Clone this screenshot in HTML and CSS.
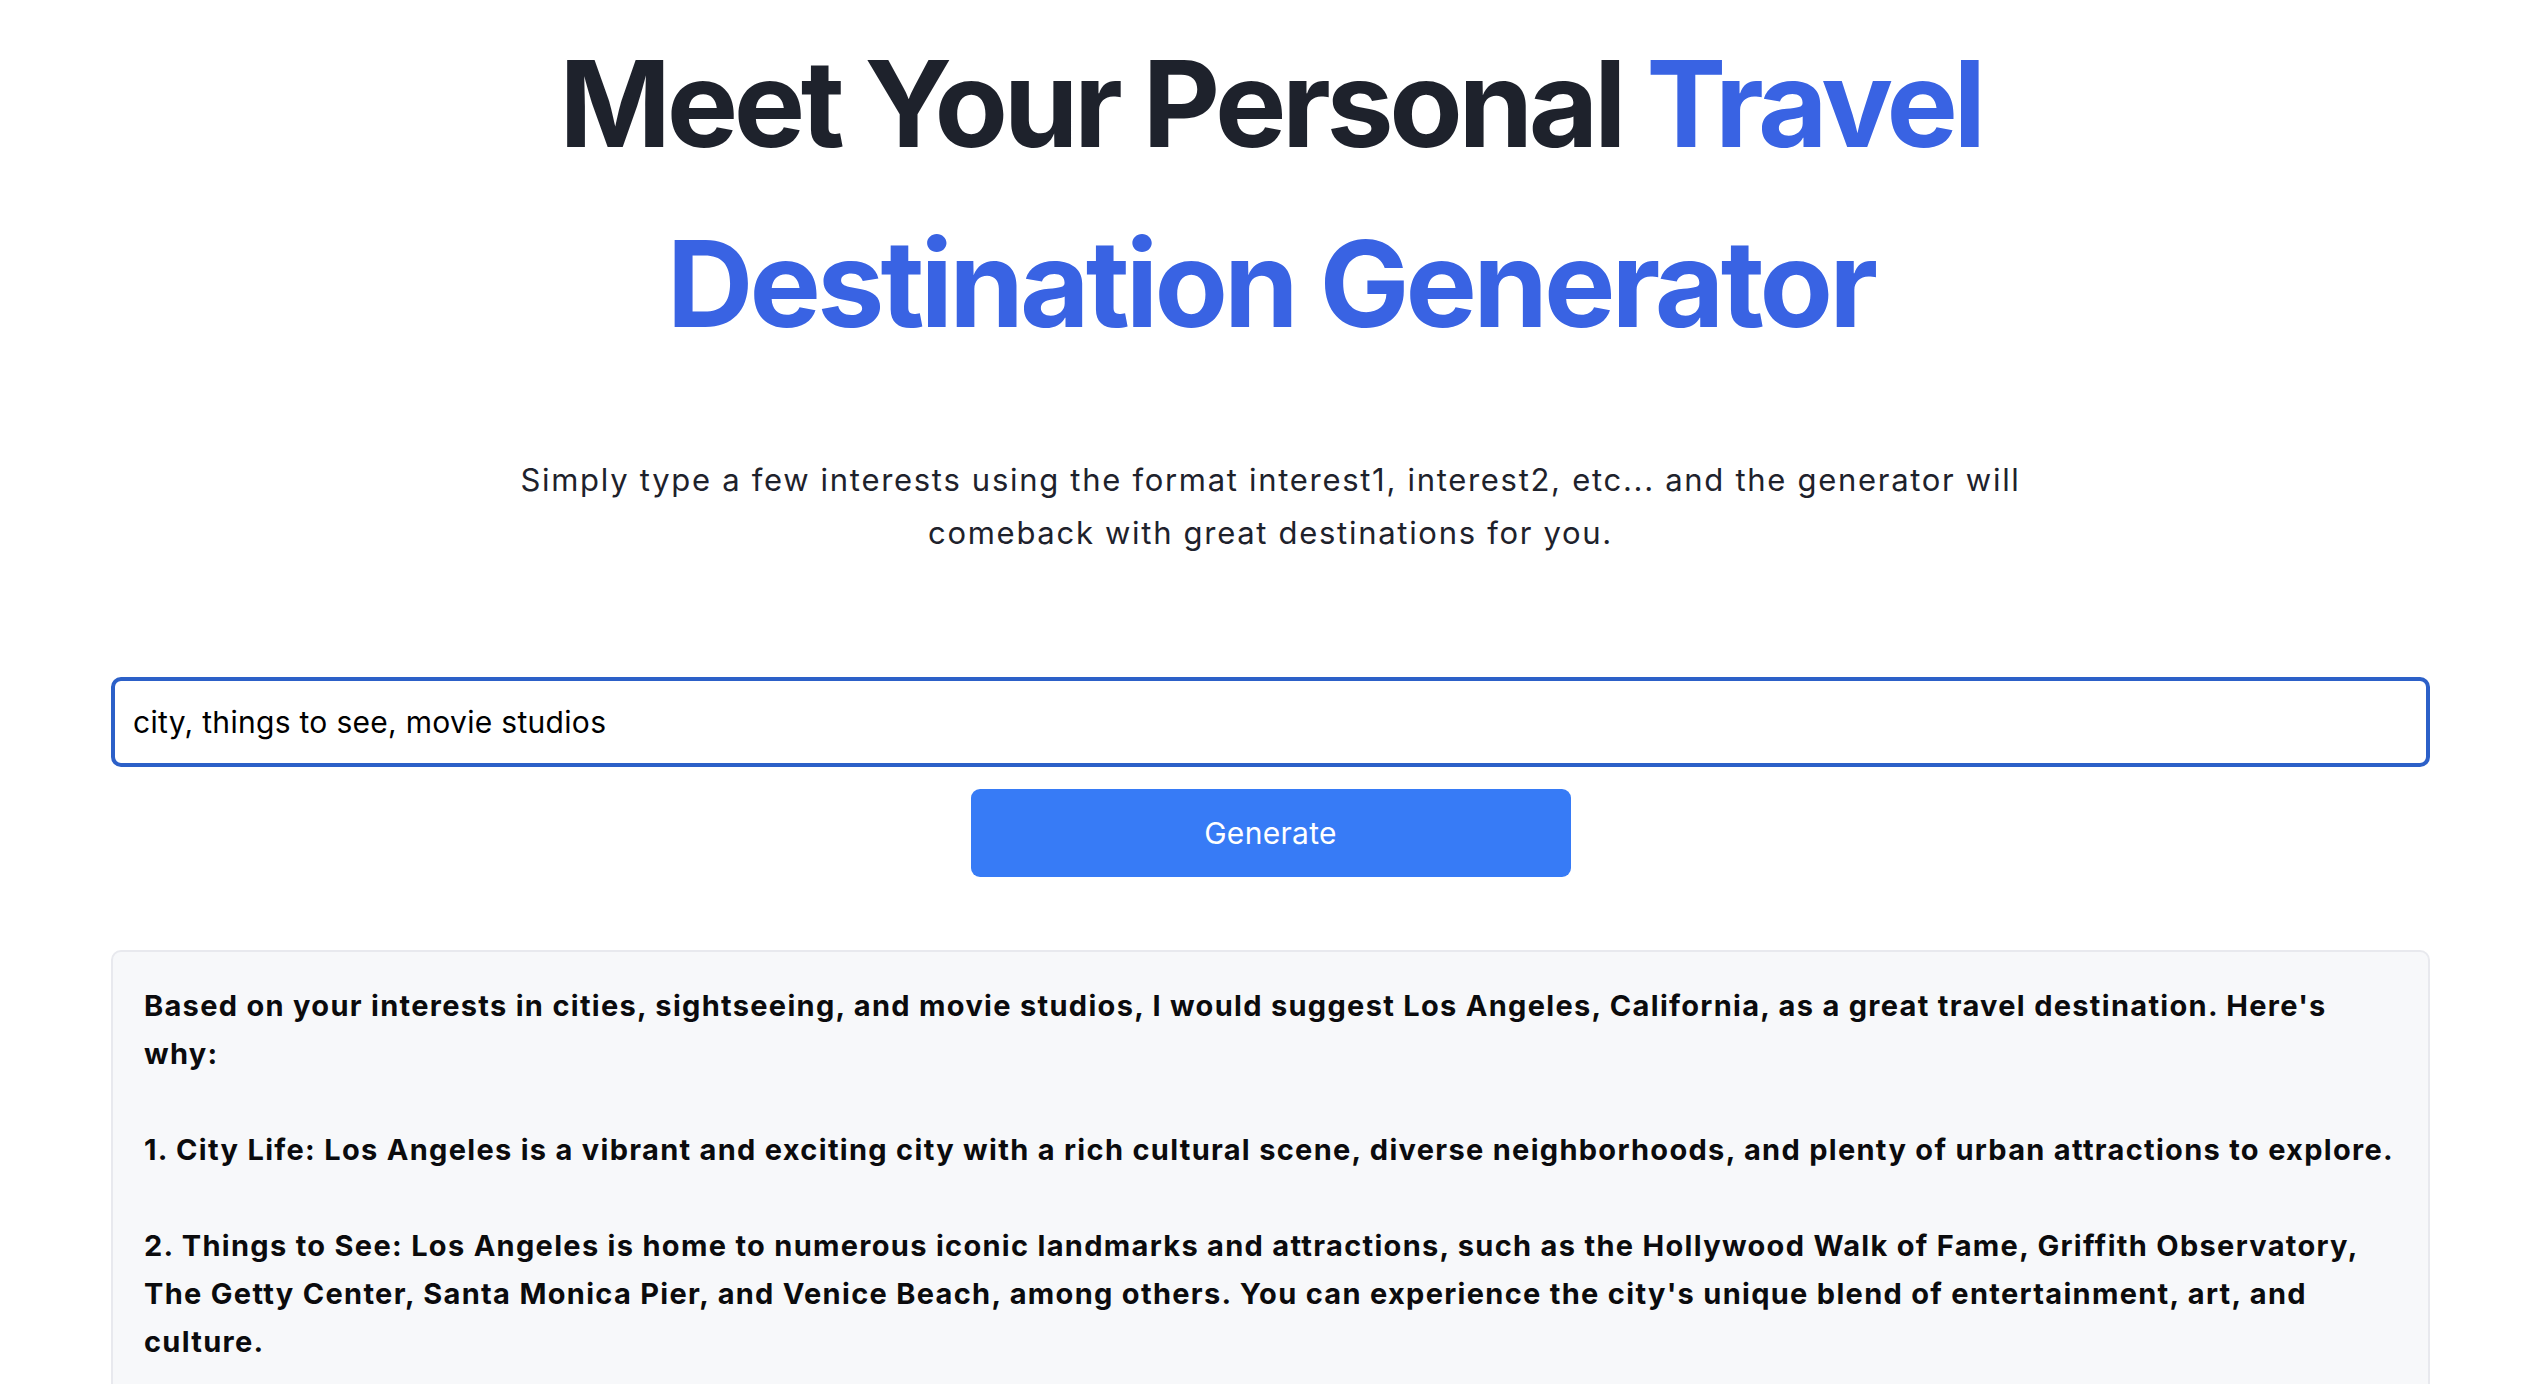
FILE: index.html
```html
<!DOCTYPE html>
<html lang="en">
<head>
<meta charset="utf-8">
<title>Travel Destination Generator</title>
<link rel="stylesheet" href="styles.css">
</head>
<body>
<main class="page">
  <h1 class="title">Meet Your Personal <span class="accent">Travel</span> <span class="accent line2">Destination Generator</span></h1>
  <p class="lead">Simply type a few interests using the format interest1, interest2, etc... and the generator will comeback with great destinations for you.</p>
  <form class="form">
    <input class="field" type="text" value="city, things to see, movie studios">
    <button class="btn" type="button">Generate</button>
  </form>
  <div class="result">Based on your interests in cities, sightseeing, and movie studios, I would suggest Los Angeles, California, as a great travel destination. Here's why:

1. City Life: Los Angeles is a vibrant and exciting city with a rich cultural scene, diverse neighborhoods, and plenty of urban attractions to explore.

2. Things to See: Los Angeles is home to numerous iconic landmarks and attractions, such as the Hollywood Walk of Fame, Griffith Observatory, The Getty Center, Santa Monica Pier, and Venice Beach, among others. You can experience the city's unique blend of entertainment, art, and culture.</div>
</main>
</body>
</html>
```

FILE: styles.css
```css
html, body {
  margin: 0;
  padding: 0;
  background: #ffffff;
}
body {
  font-family: Inter, "Noto Sans", sans-serif;
  color: #1f232e;
}
.page {
  width: 2319px;
  margin: 0 116px 0 111px;
  padding-top: 14px;
  display: flex;
  flex-direction: column;
  align-items: center;
}
.title {
  margin: 0;
  width: 1500px;
  text-align: center;
  font-size: 120px;
  line-height: 180px;
  font-weight: 700;
  letter-spacing: -4.4px;
  color: #1e222c;
}
.accent {
  color: #3963e3;
}
.line2 {
  letter-spacing: -3.9px;
}
.lead {
  margin: 79px 0 0;
  width: 1600px;
  text-align: center;
  font-size: 31px;
  line-height: 53px;
  letter-spacing: 1.7px;
  color: #1e222c;
}
.form {
  margin-top: 118px;
  width: 100%;
  display: flex;
  flex-direction: column;
  align-items: center;
  gap: 22px;
}
.field {
  box-sizing: border-box;
  width: 100%;
  height: 90px;
  border: 4px solid #2c60c8;
  border-radius: 10px;
  padding: 0 18px;
  font-family: Inter, "Noto Sans", sans-serif;
  font-size: 30px;
  letter-spacing: 0.3px;
  color: #000000;
  background: #ffffff;
  outline: none;
}
.btn {
  width: 600px;
  height: 88px;
  border: none;
  border-radius: 9px;
  background: #377bf6;
  color: #ffffff;
  font-family: Inter, "Noto Sans", sans-serif;
  font-size: 30px;
  font-weight: 400;
  letter-spacing: 0.3px;
}
.result {
  box-sizing: border-box;
  margin-top: 73px;
  width: 100%;
  background: #f7f8fa;
  border: 2px solid #e8e9ee;
  border-radius: 10px;
  padding: 30px 32px 30px 31px;
  white-space: pre-wrap;
  font-size: 29px;
  line-height: 48px;
  font-weight: 700;
  letter-spacing: 1.3px;
  color: #0b0b0d;
}
```
